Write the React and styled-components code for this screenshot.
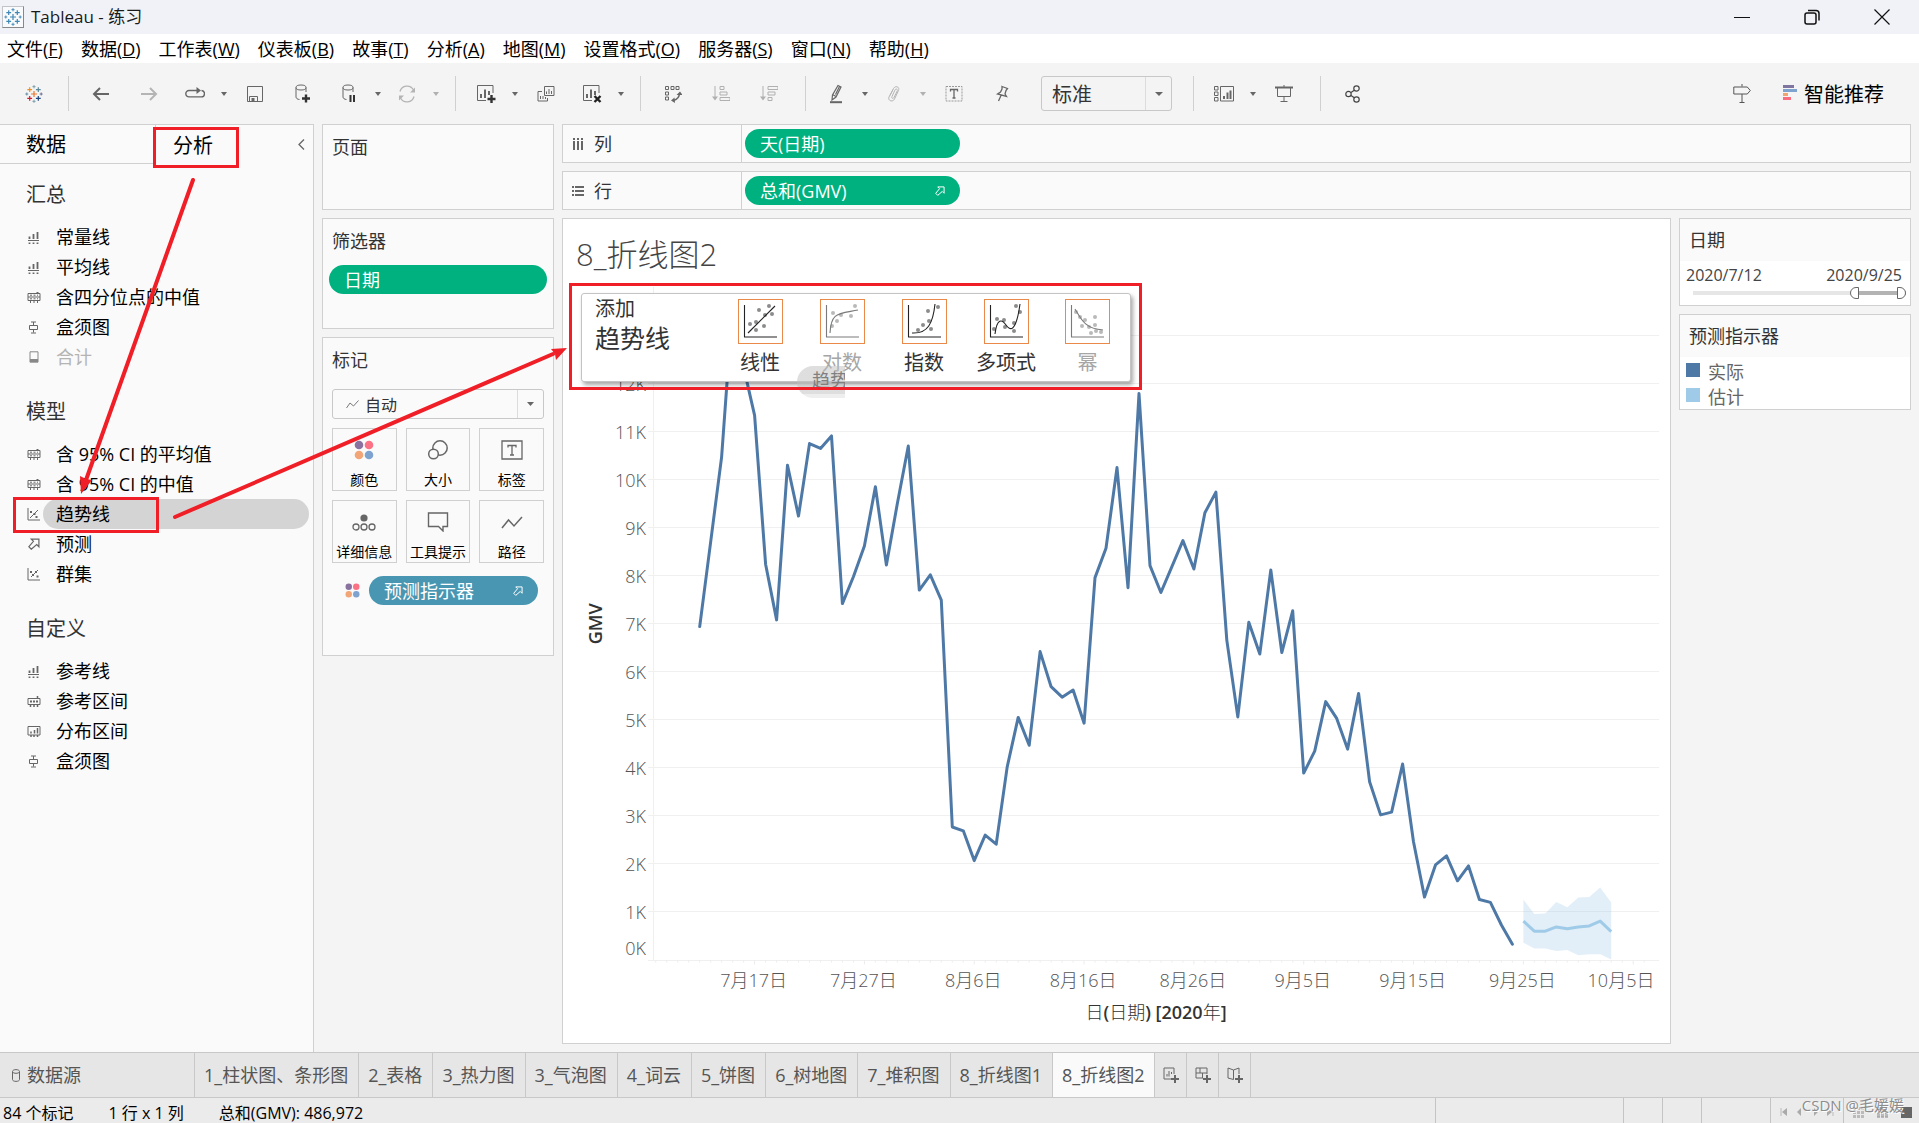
import React, { useLayoutEffect, useRef, useState } from 'react';
import styled, { createGlobalStyle, css } from 'styled-components';

const UI_FONT = '"Open Sans", "Noto Sans CJK SC", sans-serif';
const LINE = '#d0d0d0';
const GREEN = '#00b180';
const BLUE = '#4996b2';
const RED = '#f01e26';

const GlobalStyle = createGlobalStyle`
  *, *::before, *::after { box-sizing: border-box; }
  body { margin: 0; background: #f4f4f4; font-family: ${UI_FONT}; font-size: 18px; line-height: 24px; color: #333; }
  button, select, input { font: inherit; color: inherit; margin: 0; }
  button { border: 0; padding: 0; background: none; cursor: pointer; }
  h1, h2, p, ul { margin: 0; padding: 0; font-weight: 400; font-size: inherit; }
  ul { list-style: none; }
  svg { display: block; flex: none; }
`;

const Window = styled.div`
  position: relative;
  display: flex;
  flex-direction: column;
  min-height: 100vh;
  overflow: hidden;
`;

/* ---------- title and menu ---------- */
const TitleBar = styled.header`
  display: flex;
  align-items: center;
  height: 34px;
  padding: 0 2px;
  background: #f0f2f8;
  color: #1a1a1a;
`;
const AppName = styled.h1`
  flex: 1;
  padding-left: 7px;
  font-size: 17px;
`;
const WindowButton = styled.button`
  display: grid;
  place-items: center;
  width: 70px;
  height: 34px;
`;
const MenuBar = styled.nav`
  display: flex;
  align-items: center;
  gap: 18px;
  height: 29px;
  padding: 0 7px;
  background: #fff;
`;
const MenuLink = styled.a`
  color: #000;
  text-decoration: none;
  white-space: nowrap;
`;

/* ---------- toolbar ---------- */
const Toolbar = styled.div`
  display: flex;
  align-items: center;
  height: 61px;
  padding: 2px 35px 2px 0;
`;
const ToolGroup = styled.div`
  display: flex;
  align-items: center;
  height: 35px;
  padding: 0 12px 0 8px;
  border-right: ${(p) => (p.$last ? 0 : 1)}px solid ${LINE};
`;
const Tool = styled.button`
  display: grid;
  place-items: center;
  width: ${(p) => (p.$menu ? 44 : 48)}px;
  height: 35px;
`;
const ToolCaret = styled.button`
  display: grid;
  place-items: center;
  width: 14px;
  height: 35px;
`;
const SelectBox = styled.div`
  position: relative;
  display: flex;
  height: ${(p) => p.$height}px;
  width: ${(p) => p.$width};
  border: 1px solid #c8c8c8;
  border-radius: 3px;
  background: ${(p) => p.$bg};
`;
const Select = styled.select`
  flex: 1;
  appearance: none;
  border: 0;
  outline: 0;
  background: transparent;
  padding: 2px 0 0 ${(p) => p.$indent}px;
  font-size: ${(p) => p.$size}px;
  color: #333;
`;
const SelectArrow = styled.span`
  position: absolute;
  right: 0;
  top: 0;
  bottom: 0;
  display: grid;
  place-items: center;
  width: 26px;
  border-left: 1px solid #dcdcdc;
  pointer-events: none;
`;
const SelectIcon = styled.span`
  position: absolute;
  left: 13px;
  top: 10px;
  pointer-events: none;
`;
const FitSlot = styled.div`
  padding: 0 21px 0 3px;
`;
const ToolSpacer = styled.div`
  flex: 1;
`;
const ShowMe = styled.button`
  display: flex;
  align-items: center;
  gap: 7px;
  padding: 2px 0 0 17px;
  font-size: 20px;
  color: #000;
  svg { margin-bottom: 4px; }
`;

/* ---------- body ---------- */
const Workspace = styled.div`
  flex: 1;
  display: grid;
  grid-template-columns: 314px 232px minmax(0, 1fr);
  column-gap: 8px;
  padding-right: 8px;
`;
const Sidebar = styled.aside`
  background: #fafafa;
  border-top: 1px solid ${LINE};
  border-right: 1px solid ${LINE};
`;
const SideTabs = styled.div`
  display: flex;
  height: 39px;
  font-size: 20px;
  color: #000;
`;
const SideTab = styled.button`
  width: 156px;
  text-align: left;
  padding-top: 2px;
  padding-left: ${(p) => (p.$on ? 17 : 26)}px;
  border-right: ${(p) => (p.$on ? 0 : 1)}px solid ${LINE};
  border-bottom: ${(p) => (p.$on ? 0 : 1)}px solid ${LINE};
  ${(p) => p.$on && css`flex: 1;`}
`;
const Collapse = styled.button`
  display: grid;
  place-items: center;
  width: 24px;
  padding-right: 0;
`;
const SideSection = styled.section`
  padding: 16px 4px 10px 21px;
  & + & { padding-top: 15px; }
`;
const SideHeading = styled.h2`
  padding-left: 5px;
  margin-bottom: 12px;
  font-size: 20px;
  line-height: 30px;
`;
const SideItem = styled.li`
  display: flex;
  align-items: center;
  height: 30px;
`;
const SideIcon = styled.span`
  display: grid;
  place-items: center;
  width: 22px;
  padding-left: 3px;
`;
const SideButton = styled.button`
  flex: 1;
  height: 30px;
  padding-left: 13px;
  border-radius: 15px;
  text-align: left;
  color: ${(p) => (p.$off ? '#b4b4b4' : '#000')};
  background: ${(p) => (p.$on ? '#d4d4d4' : 'transparent')};
`;

const CardColumn = styled.div`
  display: flex;
  flex-direction: column;
  gap: 8px;
`;
const Card = styled.section`
  min-height: ${(p) => p.$min}px;
  padding: 10px 9px 0 9px;
  border: 1px solid ${LINE};
  background: #fafafa;
`;
const CardTitle = styled.h2`
  line-height: 24px;
`;
const FilterCard = styled(Card)`
  padding: 10px 6px 0 6px;
  ${CardTitle} { padding-left: 3px; margin-bottom: 12px; }
`;
const Pill = styled.button`
  display: flex;
  align-items: center;
  justify-content: space-between;
  width: ${(p) => p.$width};
  height: 29px;
  padding: 0 15px;
  border-radius: 15px;
  color: #fff;
  background: ${(p) => p.$color};
`;
const MarksCard = styled(Card)`
  ${CardTitle} { margin-bottom: 17px; }
`;
const MarkGrid = styled.div`
  display: grid;
  grid-template-columns: repeat(3, 1fr);
  gap: 9px;
  margin: 9px 0 13px;
`;
const MarkButton = styled.button`
  display: flex;
  flex-direction: column;
  align-items: center;
  justify-content: space-between;
  height: 63px;
  padding: 11px 0 0;
  border: 1px solid ${LINE};
  font-size: 14px;
  line-height: 20px;
  color: #000;
  white-space: nowrap;
`;
const EncodedField = styled.div`
  display: flex;
  align-items: center;
  gap: 9px;
  padding: 0 6px 0 13px;
`;

const Main = styled.main`
  display: grid;
  grid-template-columns: minmax(0, 1fr) 232px;
  grid-template-rows: 39px 39px minmax(0, 1fr);
  gap: 8px;
  padding-bottom: 8px;
`;
const Shelf = styled.div`
  grid-column: 1 / -1;
  display: flex;
  align-items: stretch;
  border: 1px solid ${LINE};
  background: #fafafa;
`;
const ShelfName = styled.div`
  display: flex;
  align-items: center;
  gap: 10px;
  width: 179px;
  padding-left: 9px;
  border-right: 1px solid ${LINE};
`;
const ShelfBody = styled.div`
  display: flex;
  align-items: center;
  padding-left: 3px;
`;
const View = styled.section`
  display: flex;
  flex-direction: column;
  border: 1px solid ${LINE};
  background: #fff;
`;
const SheetTitle = styled.h2`
  padding: 15px 0 11px 13px;
  font-size: 31px;
  line-height: 40px;
  font-weight: 300;
  color: #444;
`;
const ChartBox = styled.div`
  flex: 1;
  min-height: 400px;
  overflow: hidden;
`;
const AxisText = styled.text`
  font-size: 18px;
  font-weight: 300;
  fill: #555;
`;
const AxisTitle = styled.text`
  font-size: 18px;
  font-weight: 600;
  fill: #333;
`;
const LightSpan = styled.tspan`
  font-weight: 300;
`;

const SideCards = styled.div`
  display: flex;
  flex-direction: column;
  gap: 8px;
`;
const LegendCard = styled.section`
  border: 1px solid ${LINE};
  background: #fff;
`;
const LegendTitle = styled.h2`
  padding: 9px;
  line-height: 24px;
  background: #fafafa;
`;
const DateRow = styled.div`
  display: flex;
  justify-content: space-between;
  padding: 2px 8px 0 6px;
  font-size: 16px;
  color: #444;
`;
const RangeTrack = styled.div`
  position: relative;
  height: 12px;
  margin: 0 4px 6px 13px;
  background: linear-gradient(to right, #e6e6e6 77%, #b3b3b3 77%) center / 100% 4px no-repeat;
`;
const RangeInput = styled.input`
  position: absolute;
  inset: 0;
  width: 100%;
  height: 12px;
  appearance: none;
  background: none;
  pointer-events: none;
  &::-webkit-slider-thumb {
    appearance: none;
    width: 9px;
    height: 12px;
    border: 1px solid #666;
    border-radius: ${(p) => (p.$end ? '0 6px 6px 0' : '6px 0 0 6px')};
    background: #fff;
    pointer-events: auto;
  }
`;
const LegendList = styled.ul`
  padding: 2px 0 0 6px;
`;
const LegendItem = styled.li`
  display: flex;
  align-items: center;
  gap: 8px;
  height: 25px;
  color: #666;
  &::before { content: ''; width: 14px; height: 14px; margin-bottom: 4px; background: ${(p) => p.$color}; }
`;

/* ---------- bottom ---------- */
const SheetTabs = styled.nav`
  display: flex;
  height: 46px;
  border-top: 1px solid #c8c8c8;
  border-bottom: 1px solid #c8c8c8;
  background: #e6e6e6;
`;
const SheetTab = styled.button`
  display: flex;
  align-items: center;
  padding: 0 10px 0 9px;
  border-right: 1px solid #c8c8c8;
  color: #555;
  white-space: nowrap;
  background: ${(p) => (p.$on ? '#fafafa' : 'transparent')};
`;
const SourceTab = styled(SheetTab)`
  gap: 7px;
  width: 195px;
  padding-left: 12px;
`;
const NewTab = styled(SheetTab)`
  justify-content: center;
  width: 32px;
  padding: 0;
`;
const StatusBar = styled.footer`
  display: flex;
  height: 25px;
  background: #ebebeb;
  color: #000;
  font-size: 16px;
`;
const StatusText = styled.div`
  flex: 1;
  display: flex;
  gap: 35px;
  padding: 3px 0 0 3px;
`;
const StatusCell = styled.div`
  display: flex;
  align-items: flex-end;
  justify-content: space-between;
  width: ${(p) => p.$width}px;
  padding: 0 7px 5px 9px;
  border-left: 1px solid #c4c4c4;
`;

/* ---------- floating parts ---------- */
const DropPanel = styled.div`
  position: absolute;
  left: 581px;
  top: 293px;
  display: flex;
  width: 550px;
  height: 89px;
  padding: 5px 20px 0 13px;
  border: 1px solid #c4c4c4;
  border-radius: 3px;
  background: #fff;
  box-shadow: 2px 3px 4px rgba(0, 0, 0, 0.35);
`;
const DropTitle = styled.div`
  flex: 1;
  font-size: 20px;
  line-height: 20px;
  strong { display: block; padding-top: 4px; font-size: 25px; line-height: 30px; font-weight: 400; }
`;
const ModelButton = styled.button`
  display: flex;
  flex-direction: column;
  align-items: center;
  gap: 4px;
  width: 82px;
  font-size: 20px;
  line-height: 30px;
  color: ${(p) => (p.$off ? '#a6a6a6' : '#333')};
`;
const ModelIcon = styled.span`
  width: 45px;
  height: 45px;
  border: 1px solid #ea8a4a;
`;
const ModelRow = styled.div`
  display: flex;
  & > button:last-child { width: 45px; margin-left: 18px; }
`;
const DragGhost = styled.div`
  position: absolute;
  left: 797px;
  top: 366px;
  width: 48px;
  height: 32px;
  padding-left: 15px;
  overflow: hidden;
  border-radius: 16px 0 0 16px;
  background: linear-gradient(rgba(190, 190, 190, 0.5) 28px, rgba(200, 200, 200, 0.3) 28px);
  color: #808080;
  line-height: 28px;
  white-space: nowrap;
`;
const Marker = styled.svg`
  position: absolute;
  left: 0;
  top: 0;
  pointer-events: none;
`;
const Watermark = styled.div`
  position: absolute;
  right: 15px;
  bottom: 6px;
  font-size: 15px;
  color: #8c8c8c;
  text-shadow: 1px 1px 0 #fff;
  pointer-events: none;
`;

/* ---------- icons ---------- */
const Svg = ({ w = 18, h = 18, c = '#666', sw = 1, children }) => (
  <svg width={w} height={h} viewBox={`0 0 ${w} ${h}`} fill="none" stroke={c} strokeWidth={sw} aria-hidden="true">
    {children}
  </svg>
);
const Caret = ({ off, size = 6 }) => (
  <svg width={size} height="4" viewBox="0 0 6 4" preserveAspectRatio="none" fill={off ? '#b0b0b0' : '#666'} aria-hidden="true">
    <path d="M0 0h6L3 4z" />
  </svg>
);
const logoMarks = [
  [9, 9, 3, '#eb912c'], [9, 1.7, 1.6, '#7099a6'], [9, 16.3, 1.6, '#7099a6'], [1.8, 9, 1.5, '#59879b'], [16.2, 9, 1.5, '#5c6692'],
  [4.7, 4.7, 2.4, '#eb912c'], [13.3, 4.7, 2.4, '#59879b'], [4.7, 13.3, 2.4, '#c72035'], [13.3, 13.3, 2.4, '#1f447e'],
];
const Logo = ({ mono, size }) => (
  <svg width={size} height={size} viewBox="0 0 18 18" fill="none" aria-hidden="true">
    {logoMarks.map(([x, y, r, c], i) => (
      <path key={i} d={`M${x - r} ${y}h${2 * r}M${x} ${y - r}v${2 * r}`} stroke={mono ? '#3f87b5' : i === 0 ? '#e8762d' : c} strokeWidth={r > 2 ? 1.2 : 0.9} />
    ))}
  </svg>
);
const LogoTile = styled.span`
  display: grid;
  place-items: center;
  width: 22px;
  height: 22px;
  background: #f8fafc;
  border: 1px solid #c0c4c8;
  border-right-color: #888;
  border-bottom-color: #888;
`;
const Back = () => <Svg c="#666" sw={2}><path d="M17 9H2M8 3L2 9l6 6" /></Svg>;
const Forward = () => <Svg c="#b4b4b4" sw={2}><path d="M1 9h15M10 3l6 6-6 6" /></Svg>;
const Redo = () => (
  <Svg w={20} h={14}><path d="M5 3.5H4a3.2 3.2 0 0 0 0 6.4h12a3.2 3.2 0 0 0 .5-6.4M5 3.5h8" strokeWidth="1.4" /><path d="M11.5 0l4.5 3.5L11.5 7z" fill="#666" stroke="none" /></Svg>
);
const Save = () => <Svg><path d="M1.5 1.5h15v15h-15zM3.5 16v-4.500h8V16" /><path d="M5.500 13h3v3h-3z" fill="#666" stroke="none" /></Svg>;
const Cylinder = () => (
  <>
    <ellipse cx="6" cy="3.500" rx="5" ry="2.500" /><path d="M1 3.500V13c0 1.500 1.500 2.300 3.500 2.500M11 3.500V8" />
  </>
);
const DbAdd = () => <Svg w={16} h={19}><Cylinder /><path d="M7 14.500h8M11 10.500v8" stroke="#333" strokeWidth="2.400" /></Svg>;
const DbPause = () => <Svg w={14} h={19}><Cylinder /><path d="M8.500 11v7M12 11v7" stroke="#333" strokeWidth="2" /></Svg>;
const Refresh = () => (
  <Svg c="#b4b4b4"><path d="M2 6.500A7.300 7.300 0 0 1 15.500 5M16 11.500A7.300 7.300 0 0 1 2.500 13" strokeWidth="1.300" /><path d="M17 2.500v5h-5zM1 15.500v-5h5z" fill="#b4b4b4" stroke="none" /></Svg>
);
const ChartFrame = () => (
  <>
    <path d="M17 9V1.500H1.500v15H10" /><path d="M5 14v-4M9 14V5.500M13 11V7" strokeWidth="2" />
  </>
);
const ChartAdd = () => <Svg w={20} h={19}><ChartFrame /><path d="M11.500 15h8M15.500 11v8" stroke="#333" strokeWidth="2.400" /></Svg>;
const ChartClear = () => <Svg w={20} h={19}><ChartFrame /><path d="M12.500 12l6 6M18.500 12l-6 6" stroke="#222" strokeWidth="2.400" /></Svg>;
const ChartCopy = () => (
  <Svg><path d="M7.500 1.500h9.500v9H7.500zM5 6.500H1v9.500h9.500v-3M9.500 9V6.500M12 9V4M14.500 9V6M3.500 14v-3M6 14v-3M8.500 14v-2" /></Svg>
);
const Swap = () => (
  <Svg><path d="M1.500 1.500h3v3h-3zM7 1.500h3v3H7zM12 1.500h3v3h-3zM1.500 7h3v3h-3zM1.500 12h3v3h-3z" /><path d="M15.500 8c0 4-2.500 6.500-6 7.500" strokeWidth="1.400" /><path d="M12.500 10l3.500-3.500L18.500 10zM10.500 12.500L7 15.500l4 2.500z" fill="#666" stroke="none" /></Svg>
);
const SortAsc = () => <Svg c="#b0b0b0"><path d="M3 1v13M8 1.500h4v3H8zM8 7h7v3H8zM8 12.500h10v3H8z" /><path d="M0 11.500h6L3 15.500z" fill="#b0b0b0" stroke="none" /></Svg>;
const SortDesc = () => <Svg c="#b0b0b0"><path d="M3 1v13M8 1.500h10v3H8zM8 7h7v3H8zM8 12.500h4v3H8z" /><path d="M0 11.500h6L3 15.500z" fill="#b0b0b0" stroke="none" /></Svg>;
const Highlight = () => (
  <Svg w={14} h={20}><path d="M9 1.500l3 1.500-5 10-4 3 .5-5zM3.500 10.500l3.500 2M10.500 2.500l-4 8" strokeWidth="1.200" /><path d="M1 18.200h12" strokeWidth="2" /></Svg>
);
const Clip = () => (
  <Svg w={14} c="#b4b4b4"><path d="M3 10.500L6.500 3.500c2-3.500 6.500-1.500 5 2L7.500 14c-1.500 3.500-7 2-5.500-2L6 4.500M5 11.500l3-6.500c1-2 3-.5 2.300.8L7 12.500c-1 1.700-3 .7-2-1" /></Svg>
);
const TextBox = () => <Svg><path d="M1 1.500h16v14.500H1z" strokeDasharray="2 1" stroke="#999" /><path d="M5.500 6.500V4.500h7v2M9 4.500v8.500M7.500 13h3" strokeWidth="1.300" /></Svg>;
const Pin = () => <Svg w={14}><path d="M7 1.500l5.500 2-1.500 2L10 9l1.500 2.500L2.500 9l3-2L7 4zM6 10.500L3.500 16" strokeWidth="1.300" /></Svg>;
const CardsIcon = () => (
  <Svg w={22}><path d="M1.500 1.500h3.500v3.500H1.500zM1.500 7h3.500v3.500H1.500zM1.500 12.500h3.500V16H1.500zM7.500 1.500h13V16h-13z" /><path d="M11 14v-3M14.500 14V7.500M17.500 14V5.500" strokeWidth="2" /></Svg>
);
const Present = () => <Svg w={18}><path d="M0 2.500h18" strokeWidth="2" /><path d="M9 0v2M2.500 3v8.500h13V3M9 11.500V16M5.500 16.500h7" /></Svg>;
const Share = () => <Svg w={16} c="#444" sw={1.2}><circle cx="3.500" cy="9" r="2.700" /><circle cx="11.500" cy="3.500" r="2.700" /><circle cx="11.500" cy="14.500" r="2.700" /><path d="M6 7.500l3.300-2.300M6 10.500l3.300 2.300" /></Svg>;
const Guide = () => <Svg w={18} h={19} c="#555"><path d="M9 0v2.500M9 10v8M6.500 18.500h5M.8 3h13.500l3 3.500-3 3.500H.8z" /></Svg>;
const ShowMeIcon = () => (
  <Svg w={14} h={16}><g stroke="none"><path d="M0 0h11v3H0z" fill="#8074a0" /><path d="M0 4h14v3H0z" fill="#7fa3cf" /><path d="M0 8h5v3H0z" fill="#f0a470" /><path d="M0 12h8v3H0z" fill="#fb6b7f" /></g></Svg>
);
const ForecastArrow = ({ c = '#fff', s = 10 }) => (
  <svg width={s} height={s} viewBox="0 0 11 11" fill="none" stroke={c} strokeWidth="1.100" aria-hidden="true">
    <path d="M3 1h7v7L8 6 3 10.300.8 8 5 3z" />
  </svg>
);
const FourDots = ({ s = 20 }) => (
  <svg width={s} height={s} viewBox="0 0 20 20" aria-hidden="true">
    <circle cx="5" cy="5" r="4.300" fill="#8a72a0" /><circle cx="15" cy="5" r="4.300" fill="#fb7185" />
    <circle cx="5" cy="15" r="4.300" fill="#f2a678" /><circle cx="15" cy="15" r="4.300" fill="#7fa3cf" />
  </svg>
);
const bars = 'M2.500 8V5.500M6.500 8V3M10.500 8V1M2.500 13v-1.500M6.500 13v-1.500M10.500 13v-1.500';
const sideIcons = {
  line: <Svg w={13} h={13}><path d={bars} strokeWidth="1.800" /><path d="M1 9.500h11" /></Svg>,
  quart: <Svg w={14} h={13}><path d="M1 2.500h12v7H1zM1 6h12M3.500 9.500V12M7 9.500V12M10.500 9.500V12" /><path d="M3 4.200h8M3 7.800h8" strokeDasharray="2 1.500" /><path d="M10.500 1v2" strokeWidth="2" /></Svg>,
  box: <Svg w={11} h={13}><path d="M3 1h5M5.500 1v3M1.500 4.500h8v4h-8zM5.500 8.500v3M3 12h5" /></Svg>,
  total: <Svg w={10} h={12} c="#888"><path d="M1 .8h8v10.400H1z" /><path d="M1 8h8v3H1z" fill="#888" stroke="none" /></Svg>,
  trend: <Svg w={13} h={13}><path d="M1 0v12h12M3 10L11 2" /><path d="M3 3h2v2H3zM6.500 5h2v2h-2zM8.500 8h2v2h-2z" fill="#666" stroke="none" /></Svg>,
  forecast: <ForecastArrow c="#666" s={12} />,
  cluster: <Svg w={13} h={13}><path d="M1 0v12h12M4 9l4-4 3-3" /><path d="M3 3h2v2H3zM8 3h2v2H8zM5 6h2v2H5zM9.500 7.500h2v2h-2z" fill="#666" stroke="none" /></Svg>,
  band: <Svg w={14} h={13}><path d="M1 3.500h12v6H1z" /><path d="M3 6.500h8" strokeWidth="2" strokeDasharray="2 1" /><path d="M10.500 1v3M3.500 10v2M7 10v2M10.500 10v2" strokeWidth="1.500" /></Svg>,
  dist: <Svg w={14} h={13}><path d="M1 1.500h12v8.500H1z" /><path d="M4 8.500V6.500M7.500 8.500V5M10.500 8.500V3M4 10v2M7 10v2M10.500 10v2" strokeWidth="1.500" /></Svg>,
};
const markIcons = {
  color: <FourDots />,
  size: <Svg w={22} h={20} sw={1.5}><circle cx="13" cy="8" r="7.200" /><circle cx="6.500" cy="14" r="4.800" fill="#fafafa" /></Svg>,
  label: <Svg w={22} h={20} sw={1.3}><path d="M1 1h20v18H1z" /><path d="M7 7.500V5.500h8v2M11 5.500v9.500M9 15h4" /></Svg>,
  detail: <Svg w={24} h={20} sw={1.3}><circle cx="12" cy="6" r="3.600" fill="#666" stroke="none" /><circle cx="4" cy="15" r="3" /><circle cx="12" cy="15" r="3" /><circle cx="20" cy="15" r="3" /></Svg>,
  tooltip: <Svg w={22} h={20} sw={1.4}><path d="M1.500 1h19v13.500H16V19l-4.500-4.500h-10z" /></Svg>,
  path: <Svg w={22} h={20} sw={1.5}><path d="M1 16L7.500 8l5.500 6L21 5" /></Svg>,
};

/* ---------- chart data, thousands of GMV per day from 7/12 ---------- */
const actual = [
  6.95, 8.72, 10.48, 13.64, 12.35, 11.35, 8.25, 7.09, 10.31, 9.25, 10.76, 10.66, 10.92, 7.43, 7.99, 8.63, 9.86, 8.23, 9.52,
  10.71, 7.71, 8.03, 7.5, 2.78, 2.7, 2.08, 2.61, 2.42, 4.03, 5.06, 4.48, 6.43, 5.7, 5.48, 5.63, 4.94, 7.97, 8.58, 10.26, 7.76,
  11.8, 8.22, 7.66, 8.2, 8.74, 8.15, 9.32, 9.75, 6.67, 5.07, 7.04, 6.38, 8.13, 6.41, 7.28, 3.9, 4.36, 5.39, 5.04, 4.4, 5.56,
  3.72, 3.03, 3.09, 4.09, 2.47, 1.32, 1.99, 2.18, 1.66, 1.97, 1.27, 1.21, 0.74, 0.34,
];
const estimate = [0.82, 0.61, 0.61, 0.7, 0.66, 0.7, 0.72, 0.82, 0.6];
const upper = [1.27, 0.97, 0.98, 1.22, 1.11, 1.31, 1.32, 1.52, 1.21];
const lower = [0.37, 0.25, 0.25, 0.2, 0.22, 0.11, 0.13, 0.13, 0.02];
const dateTicks = [[5, '7月17日'], [15, '7月27日'], [25, '8月6日'], [35, '8月16日'], [45, '8月26日'], [55, '9月5日'], [65, '9月15日'], [75, '9月25日'], [85, '10月5日']];

function Chart() {
  const box = useRef(null);
  const [size, setSize] = useState({ w: 1107, h: 758 });
  useLayoutEffect(() => {
    const measure = () => setSize({ w: box.current.clientWidth, h: box.current.clientHeight });
    measure();
    window.addEventListener('resize', measure);
    return () => window.removeEventListener('resize', measure);
  }, []);
  const left = 90;
  const right = size.w - 11;
  const bottom = Math.round(size.h - 82) - 0.5;
  const x = (d) => left + ((d + 4.25) * (right - left)) / 91.6;
  const y = (k) => bottom - (k * (bottom - 2)) / 14.02;
  const path = (arr, start) => arr.map((v, i) => `${x(start + i).toFixed(1)},${y(v).toFixed(1)}`).join(' ');
  const ticks = Array.from({ length: 14 }, (_, k) => k);
  return (
    <ChartBox ref={box}>
      <svg width={size.w} height={size.h} role="img" aria-label="GMV 折线图">
        {ticks.map((k) => (
          <line key={k} x1={left - 5} x2={right} y1={Math.round(y(k)) - 0.5} y2={Math.round(y(k)) - 0.5} stroke="#f0f0f0" />
        ))}
        <line x1={left + 0.5} x2={left + 0.5} y1="2" y2={bottom} stroke="#f0f0f0" />
        {Array.from({ length: 91 }, (_, i) => i - 4).map((d) => (
          <line key={d} x1={x(d)} x2={x(d)} y1={bottom} y2={bottom + (d % 10 === 5 ? 4 : 2)} stroke="#ececec" />
        ))}
        {ticks.slice(0, 13).map((k) => (
          <AxisText key={k} x={left - 7} y={k === 0 ? y(0) - 6 : y(k) + 7} textAnchor="end">{k}K</AxisText>
        ))}
        {dateTicks.map(([d, t]) => (
          <AxisText key={t} x={Math.min(x(d) - 1, size.w - 49)} y={bottom + 26} textAnchor="middle">{t}</AxisText>
        ))}
        <AxisTitle x={(left + right) / 2} y={bottom + 58} textAnchor="middle">
          <LightSpan>日</LightSpan>(<LightSpan>日期</LightSpan>) [2020<LightSpan>年</LightSpan>]
        </AxisTitle>
        <AxisTitle transform={`translate(39 ${(2 + bottom) / 2}) rotate(-90)`} textAnchor="middle">GMV</AxisTitle>
        <polygon points={`${path(upper, 75)} ${lower.map((v, i) => `${x(75 + i)},${y(v)}`).reverse().join(' ')}`} fill="#a0cbe8" fillOpacity="0.3" />
        <polyline points={path(estimate, 75)} fill="none" stroke="#a0cbe8" strokeWidth="3" strokeLinejoin="round" />
        <polyline points={path(actual, 0)} fill="none" stroke="#4e79a7" strokeWidth="3" strokeLinejoin="round" strokeLinecap="round" />
      </svg>
    </ChartBox>
  );
}

const menus = [['文件', 'F'], ['数据', 'D'], ['工作表', 'W'], ['仪表板', 'B'], ['故事', 'T'], ['分析', 'A'], ['地图', 'M'], ['设置格式', 'O'], ['服务器', 'S'], ['窗口', 'N'], ['帮助', 'H']];
const sections = [
  ['汇总', [['line', '常量线'], ['line', '平均线'], ['quart', '含四分位点的中值'], ['box', '盒须图'], ['total', '合计', 'off']]],
  ['模型', [['quart', '含 95% CI 的平均值'], ['quart', '含 95% CI 的中值'], ['trend', '趋势线', 'on'], ['forecast', '预测'], ['cluster', '群集']]],
  ['自定义', [['line', '参考线'], ['band', '参考区间'], ['dist', '分布区间'], ['box', '盒须图']]],
];
const toolGroups = [
  [[Back, '后退'], [Forward, '前进'], [Redo, '重做', 'menu'], [Save, '保存'], [DbAdd, '新建数据源'], [DbPause, '暂停自动更新', 'menu'], [Refresh, '刷新', 'offmenu']],
  [[ChartAdd, '新建工作表', 'menu'], [ChartCopy, '复制工作表'], [ChartClear, '清除工作表', 'menu']],
  [[Swap, '交换行和列'], [SortAsc, '升序'], [SortDesc, '降序']],
  [[Highlight, '突出显示', 'menu'], [Clip, '组成员', 'offmenu'], [TextBox, '显示标记标签'], [Pin, '固定轴']],
  [[CardsIcon, '显示/隐藏卡', 'menu'], [Present, '演示模式']],
  [[Share, '共享']],
];
const marks = [['color', '颜色'], ['size', '大小'], ['label', '标签'], ['detail', '详细信息'], ['tooltip', '工具提示'], ['path', '路径']];
const sheets = ['1_柱状图、条形图', '2_表格', '3_热力图', '3_气泡图', '4_词云', '5_饼图', '6_树地图', '7_堆积图', '8_折线图1', '8_折线图2'];
const models = [
  ['线性', 'M10 34L37 7', [[12, 25], [18, 23], [18, 31], [26, 27], [27, 16], [21, 11], [31, 7], [34, 15]]],
  ['对数', 'M10 34C11 13 18 15 38 11', [[12, 27], [13, 14], [17, 22], [21, 16], [31, 17], [35, 7]], true],
  ['指数', 'M10 34C26 35 31 24 33 5', [[16, 31], [21, 26], [27, 22], [29, 30], [26, 12], [36, 8]]],
  ['多项式', 'M11 35C13 19 18 20 22 26S32 34 36 5', [[10, 30], [13, 20], [20, 21], [21, 28], [30, 24], [30, 32], [32, 7], [36, 13]]],
  ['幂', 'M10 10C16 20 20 30 38 31', [[11, 13], [15, 18], [17, 27], [20, 21], [24, 28], [30, 18], [30, 26], [26, 34], [31, 32], [36, 33]], true],
];

function ToolSet({ tools, last }) {
  return (
    <ToolGroup $last={last}>
      {tools.map(([Icon, name, menu]) => (
        <React.Fragment key={name}>
          <Tool $menu={!!menu} aria-label={name}><Icon /></Tool>
          {menu && <ToolCaret aria-label={`${name}选项`}><Caret off={menu === 'offmenu'} /></ToolCaret>}
        </React.Fragment>
      ))}
    </ToolGroup>
  );
}
const LogoSlot = styled.div`
  display: grid;
  place-items: center;
  width: 69px;
  height: 35px;
  border-right: 1px solid ${LINE};
`;

function TopBars() {
  return (
    <>
      <TitleBar>
        <LogoTile><Logo mono size={18} /></LogoTile>
        <AppName>Tableau - 练习</AppName>
        <WindowButton aria-label="最小化"><Svg w={16} h={16} c="#111"><path d="M0 8.500h16" /></Svg></WindowButton>
        <WindowButton aria-label="还原">
          <Svg w={16} h={16} c="#111" sw={1.5}><rect x="1" y="4" width="11" height="11" rx="2" /><path d="M4 1.500h8a3 3 0 0 1 3 3v7" /></Svg>
        </WindowButton>
        <WindowButton aria-label="关闭"><Svg w={16} h={16} c="#111" sw={1.2}><path d="M.5.5l15 15M15.500.5l-15 15" /></Svg></WindowButton>
      </TitleBar>
      <MenuBar>
        {menus.map(([t, k]) => <MenuLink href="#" key={k}>{t}(<u>{k}</u>)</MenuLink>)}
      </MenuBar>
      <Toolbar>
        <LogoSlot><Logo size={18} /></LogoSlot>
        {toolGroups.slice(0, 3).map((g, i) => <ToolSet key={i} tools={g} />)}
        <ToolSet tools={toolGroups[3]} last />
        <FitSlot>
          <SelectBox $height={35} $width="131px" $bg="#f4f4f4">
            <Select $indent={10} $size={20} aria-label="适合"><option>标准</option></Select>
            <SelectArrow><Caret size={8} /></SelectArrow>
          </SelectBox>
        </FitSlot>
        <LeftRule />
        <ToolSet tools={toolGroups[4]} />
        <ToolSet tools={toolGroups[5]} last />
        <ToolSpacer />
        <Tool aria-label="指南"><Guide /></Tool>
        <ShowMe><ShowMeIcon />智能推荐</ShowMe>
      </Toolbar>
    </>
  );
}
const LeftRule = styled.div`
  width: 1px;
  height: 35px;
  background: ${LINE};
`;

function AnalyticsPane() {
  return (
    <Sidebar>
      <SideTabs>
        <SideTab>数据</SideTab>
        <SideTab $on>分析</SideTab>
        <Collapse aria-label="折叠"><Svg w={7} h={11} sw={1.3}><path d="M6 .5L1 5.500l5 5" /></Svg></Collapse>
      </SideTabs>
      {sections.map(([name, items]) => (
        <SideSection key={name}>
          <SideHeading>{name}</SideHeading>
          <ul>
            {items.map(([icon, label, state]) => (
              <SideItem key={label}>
                <SideIcon>{sideIcons[icon]}</SideIcon>
                <SideButton $off={state === 'off'} $on={state === 'on'}>{label}</SideButton>
              </SideItem>
            ))}
          </ul>
        </SideSection>
      ))}
    </Sidebar>
  );
}

function Cards() {
  return (
    <CardColumn>
      <Card $min={86}><CardTitle>页面</CardTitle></Card>
      <FilterCard $min={111}>
        <CardTitle>筛选器</CardTitle>
        <Pill $width="100%" $color={GREEN}>日期</Pill>
      </FilterCard>
      <MarksCard $min={319}>
        <CardTitle>标记</CardTitle>
        <SelectBox $height={30} $width="100%" $bg="#fafafa">
          <SelectIcon><Svg w={13} h={9} c="#777"><path d="M.5 8l3.500-5 3.500 3L12.500.5" /></Svg></SelectIcon>
          <Select $indent={32} $size={16} aria-label="标记类型"><option>自动</option></Select>
          <SelectArrow><Caret size={7} /></SelectArrow>
        </SelectBox>
        <MarkGrid>
          {marks.map(([k, t]) => <MarkButton key={k}>{markIcons[k]}{t}</MarkButton>)}
        </MarkGrid>
        <EncodedField>
          <FourDots s={15} />
          <Pill $width="169px" $color={BLUE}>预测指示器<ForecastArrow /></Pill>
        </EncodedField>
      </MarksCard>
    </CardColumn>
  );
}

function Sheet() {
  return (
    <Main>
      <Shelf>
        <ShelfName><Svg w={12} h={12}><path d="M2 0v2M6 0v2M10 0v2M2 3v9M6 3v9M10 3v9" strokeWidth="2" /></Svg>列</ShelfName>
        <ShelfBody><Pill $width="215px" $color={GREEN}>天(日期)</Pill></ShelfBody>
      </Shelf>
      <Shelf>
        <ShelfName><Svg w={12} h={12}><path d="M0 2h2M0 6h2M0 10h2M3 2h9M3 6h9M3 10h9" strokeWidth="2" /></Svg>行</ShelfName>
        <ShelfBody><Pill $width="215px" $color={GREEN}>总和(GMV)<ForecastArrow /></Pill></ShelfBody>
      </Shelf>
      <View>
        <SheetTitle>8_折线图2</SheetTitle>
        <Chart />
      </View>
      <SideCards>
        <LegendCard>
          <LegendTitle>日期</LegendTitle>
          <DateRow><span>2020/7/12</span><span>2020/9/25</span></DateRow>
          <RangeTrack>
            <RangeInput type="range" aria-label="开始日期" min="0" max="100" defaultValue="77" />
            <RangeInput type="range" aria-label="结束日期" min="0" max="100" defaultValue="100" $end />
          </RangeTrack>
        </LegendCard>
        <LegendCard>
          <LegendTitle>预测指示器</LegendTitle>
          <LegendList>
            <LegendItem $color="#4e79a7">实际</LegendItem>
            <LegendItem $color="#a0cbe8">估计</LegendItem>
          </LegendList>
        </LegendCard>
      </SideCards>
    </Main>
  );
}

function BottomBars() {
  return (
    <>
      <SheetTabs>
        <SourceTab><Svg w={8} h={13}><path d="M.5 2.500c0-2.500 7-2.500 7 0v8c0 2.500-7 2.500-7 0zM.5 3c1 1.800 6 1.800 7 0" /></Svg>数据源</SourceTab>
        {sheets.map((s) => <SheetTab key={s} $on={s === '8_折线图2'}>{s}</SheetTab>)}
        <NewTab aria-label="新建工作表"><Svg w={16} h={16}><path d="M11 7V1H1v11h7M4 9.500V7M6 9.500V4M8.500 7V5" /><path d="M8 12h8M12 8v8" strokeWidth="2" /></Svg></NewTab>
        <NewTab aria-label="新建仪表板"><Svg w={16} h={16}><path d="M12 7V1H1v10h7M1 6h11M5 1v5M7.500 6v5" /><path d="M8 12h8M12 8v8" strokeWidth="2" /></Svg></NewTab>
        <NewTab aria-label="新建故事"><Svg w={16} h={16}><path d="M12 7V1L6.500 3 1 1v10l5.500 1.500M6.500 3v9.500" /><path d="M8 12h8M12 8v8" strokeWidth="2" /></Svg></NewTab>
      </SheetTabs>
      <StatusBar>
        <StatusText><span>84 个标记</span><span>1 行 x 1 列</span><span>总和(GMV): 486,972</span></StatusText>
        <StatusCell $width={188} />
        <StatusCell $width={39} />
        <StatusCell $width={39} />
        <StatusCell $width={69} />
        <StatusCell $width={73}>
          <Svg w={56} h={12} c="#bbb">
            <path d="M1 2v8M53 2v8" />
            <path d="M7 2v8L2 6zM21 2v8L17 6zM34 2v8l4-4zM47 2v8l5-4z" fill="#aaa" stroke="none" />
          </Svg>
        </StatusCell>
        <StatusCell $width={76}>
          <Svg w={11} h={11} c="#bbb" sw={3}><path d="M0 1.500h11M0 5.500h11M0 9.500h11" strokeDasharray="3 1" /></Svg>
          <Svg w={11} h={11} c="#aaa"><path d="M1 0h9v5H1z" fill="#999" stroke="none" /><path d="M0 6.500h11M0 9.500h11" strokeWidth="2.500" strokeDasharray="3 1" /></Svg>
          <Svg w={11} h={11}><path d="M0 0h11v11H0z" fill="#666" stroke="none" /></Svg>
        </StatusCell>
      </StatusBar>
    </>
  );
}

function TrendDropTarget() {
  return (
    <DropPanel>
      <DropTitle>添加<strong>趋势线</strong></DropTitle>
      <ModelRow>
        {models.map(([name, d, dots, off]) => (
          <ModelButton key={name} $off={off}>
            <ModelIcon>
              <svg width="43" height="43" viewBox="1 1 43 43" fill="none" opacity={off ? 0.6 : 1} aria-hidden="true">
                {dots.map(([cx, cy], i) => <circle key={i} cx={cx} cy={cy} r="2" fill="#8c8c8c" />)}
                <path d={d} stroke="#222" strokeWidth="1.100" />
                <path d="M6.500 6v32H39" stroke="#222" strokeWidth="1.100" />
              </svg>
            </ModelIcon>
            {name}
          </ModelButton>
        ))}
      </ModelRow>
    </DropPanel>
  );
}

export default function App() {
  return (
    <Window>
      <GlobalStyle />
      <TopBars />
      <Workspace>
        <AnalyticsPane />
        <Cards />
        <Sheet />
      </Workspace>
      <BottomBars />
      <TrendDropTarget />
      <DragGhost>趋势线</DragGhost>
      <Marker width="1160" height="560" fill="none" stroke={RED} strokeWidth="3" aria-hidden="true">
        <rect x="154.500" y="128.500" width="83" height="38" />
        <rect x="14.500" y="498.500" width="143" height="33" />
        <rect x="570.500" y="284.500" width="570" height="104" />
        <path d="M193 180L86 480M175 517L553 354" strokeWidth="4" strokeLinecap="round" />
        <path d="M81 494l-1-18 6 3 6 1zM567 348l-11 12-1-6-4-5z" fill={RED} stroke="none" />
      </Marker>
      <Watermark>CSDN @毛媛媛</Watermark>
    </Window>
  );
}
